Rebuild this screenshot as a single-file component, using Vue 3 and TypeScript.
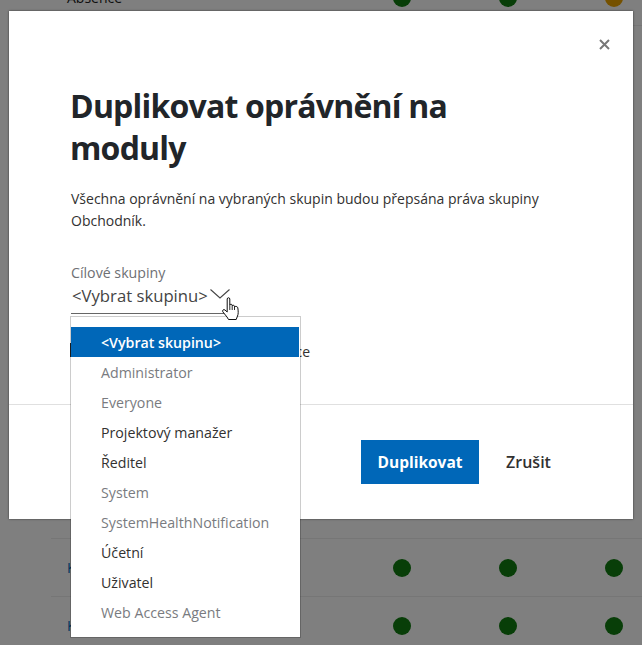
<script setup lang="ts">
const options: { label: string; muted?: boolean; selected?: boolean }[] = [
  { label: '<Vybrat skupinu>', selected: true },
  { label: 'Administrator', muted: true },
  { label: 'Everyone', muted: true },
  { label: 'Projektový manažer' },
  { label: 'Ředitel' },
  { label: 'System', muted: true },
  { label: 'SystemHealthNotification', muted: true },
  { label: 'Účetní' },
  { label: 'Uživatel' },
  { label: 'Web Access Agent', muted: true },
]
const rows = ['Absence', 'Kalendář', 'Kontakty']
</script>

<template>
  <div class="page">
    <div class="table">
      <div v-for="(r, i) in rows" :key="r" class="row" :class="{ first: i === 0, second: i === 1 }">
        <span class="name" :class="{ link: i > 0 }">{{ r }}</span>
        <span class="dot"></span>
        <span class="dot"></span>
        <span class="dot" :class="{ amber: i === 0 }"></span>
      </div>
    </div>
    <div class="backdrop"></div>
    <div class="modal">
      <div class="close-row">
        <svg class="close" width="11" height="11" viewBox="0 0 11 11">
          <path d="M1 1L10 10M10 1L1 10" stroke="#777" stroke-width="2" fill="none" />
        </svg>
      </div>
      <div class="content">
        <h1>Duplikovat oprávnění na moduly</h1>
        <p class="desc">Všechna oprávnění na vybraných skupin budou přepsána práva skupiny Obchodník.</p>
        <div class="label">Cílové skupiny</div>
        <div class="select">
          <span>&lt;Vybrat skupinu&gt;</span>
          <svg width="20" height="10" viewBox="0 0 20 10">
            <path d="M0.5 0.5L10 9L19.5 0.5" stroke="#444" stroke-width="1.1" fill="none" />
          </svg>
        </div>
        <div class="check">
          <span class="box"></span>
          <span class="check-text">Včetně nastavení práce</span>
        </div>
      </div>
      <div class="footer">
        <button class="primary">Duplikovat</button>
        <button class="ghost">Zrušit</button>
      </div>
    </div>
    <ul class="menu">
      <li v-for="o in options" :key="o.label" :class="{ muted: o.muted, selected: o.selected }">{{ o.label }}</li>
    </ul>
    <svg class="cursor" width="17" height="23" viewBox="0 0 17 23">
      <path
        d="M5.2 2C5.2 .3 7.8 .3 7.8 2V8C8 7 10 7 10.2 8V9C10.5 8 12.3 8 12.5 9.2V10C13 9 15.5 9.2 15.8 10.8C16.3 14 16.5 17 15.5 19L14.2 22.5H6.5L5 20L.8 14.8C0 13.5 1.5 11.8 3 13L5.2 15Z"
        fill="#fff" stroke="#111" stroke-width="1" stroke-linejoin="round"
      />
      <path d="M7.8 8V13M10.2 9V13M12.5 10V13" stroke="#111" stroke-width="0.9" fill="none" />
    </svg>
  </div>
</template>

<style>
html, body { margin: 0; background: #808080; }
</style>

<style scoped>
.page {
  position: relative;
  width: 642px;
  height: 645px;
  overflow: hidden;
  background: #fff;
  font-family: "Open Sans", "Noto Sans", sans-serif;
  color: #323130;
}
.table {
  display: flex;
  flex-direction: column;
  margin: -30px 0 0 51px;
}
.row {
  display: grid;
  grid-template-columns: 326px 106px 106px 18px;
  align-items: center;
  box-sizing: border-box;
  height: 58px;
  border-bottom: 1px solid #ececec;
  padding-left: 16px;
  font-size: 14px;
}
.row.first { height: 56px; }
.row.second {
  height: 59px;
  margin-top: 512px;
  border-top: 1px solid #ececec;
}
.name { color: #222; }
.name.link { color: #0067b8; }
.dot {
  width: 18px;
  height: 18px;
  border-radius: 50%;
  background: #107c10;
}
.dot.amber { background: #eaa300; }
.backdrop {
  position: absolute;
  inset: 0;
  background: rgba(0, 0, 0, 0.5);
}
.modal {
  position: absolute;
  left: 9px;
  top: 11px;
  width: 624px;
  height: 508px;
  background: #fff;
  box-shadow: 0 0 2px rgba(0, 0, 0, 0.6);
  display: flex;
  flex-direction: column;
}
.close-row {
  display: flex;
  justify-content: flex-end;
  padding: 28px 23px 0 0;
  height: 11px;
}
.content {
  flex: 1;
  padding: 35px 62px 0;
  min-height: 0;
}
h1 {
  margin: 0 0 0 -1px;
  font-size: 32px;
  line-height: 42px;
  font-weight: 700;
  color: #212529;
  letter-spacing: -0.8px;
  width: 420px;
}
.desc {
  margin: 19px 0 0;
  font-size: 14px;
  line-height: 22px;
  width: 500px;
}
.label {
  margin-top: 31px;
  font-size: 14.2px;
  line-height: 20px;
  color: #6e7074;
}
.select {
  display: flex;
  align-items: flex-start;
  gap: 2px;
  box-sizing: border-box;
  height: 31px;
  width: 157px;
  padding-left: 1px;
  border-bottom: 1px solid #666;
  font-size: 16.7px;
  line-height: 26px;
  color: #444;
  white-space: nowrap;
}
.select svg {
  flex: none;
  margin-top: 6px;
}
.check {
  display: flex;
  align-items: flex-start;
  gap: 8px;
  margin: 29px 0 0 -1px;
  font-size: 14px;
  white-space: nowrap;
  height: 15px;
}
.box {
  width: 14px;
  height: 14px;
  box-sizing: border-box;
  border: 2px solid #222;
  flex: none;
}
.check-text {
  width: 218px;
  text-align: right;
  line-height: 18px;
}
.footer {
  border-top: 1px solid #e0e0e0;
  height: 115px;
  box-sizing: border-box;
  padding: 35px 82px 0 0;
  display: flex;
  justify-content: flex-end;
  align-items: flex-start;
  gap: 27px;
}
button {
  border: 0;
  padding: 0;
  font: inherit;
  height: 44px;
  background: none;
  white-space: nowrap;
}
.primary {
  width: 118px;
  background: #0067b8;
  color: #fff;
  font-weight: 700;
  font-size: 15.5px;
}
.ghost {
  width: 45px;
  color: #323130;
  font-weight: 600;
  font-size: 16px;
}
.menu {
  position: absolute;
  left: 70px;
  top: 316px;
  width: 229px;
  margin: 0;
  padding: 10px 0 10px;
  list-style: none;
  background: #fff;
  background-clip: padding-box;
  border: 1px solid rgba(0, 0, 0, 0.2);
  font-size: 14.2px;
}
.menu li {
  height: 30px;
  line-height: 32px;
  margin-right: 1px;
  padding-left: 30px;
  color: #323130;
}
.menu li.muted { color: #797b80; }
.menu li.selected {
  background: #0067b8;
  color: #fff;
  font-weight: 600;
}
.cursor {
  position: absolute;
  left: 222px;
  top: 297px;
}
</style>
